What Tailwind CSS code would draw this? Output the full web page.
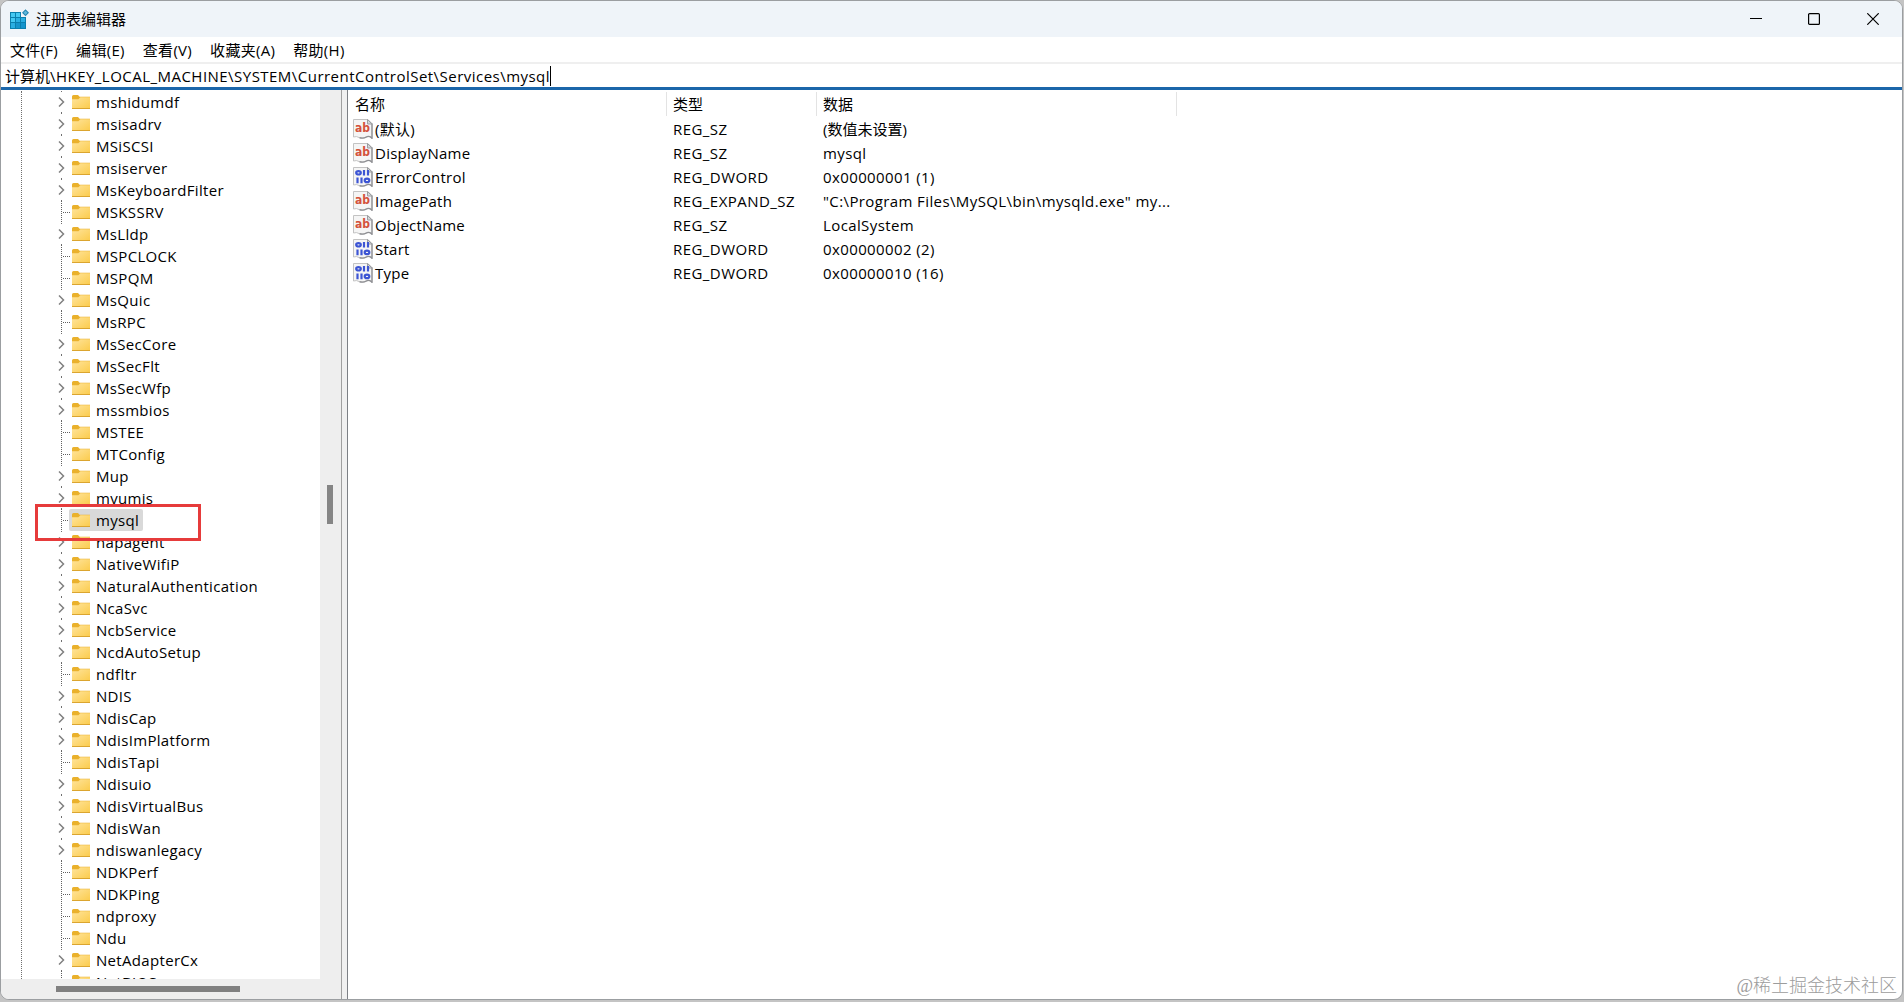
<!DOCTYPE html>
<html lang="zh-CN">
  <head>
    <meta charset="UTF-8" />
    <meta name="viewport" content="width=device-width, initial-scale=1.0" />
    <title>注册表编辑器</title>
    <script src="https://cdn.jsdelivr.net/npm/@tailwindcss/browser@4"></script>
  </head>
  <body class="h-screen overflow-hidden bg-[#c4c4c4] font-['Open_Sans','Noto_Sans_CJK_SC',sans-serif] text-[15px] text-black">
    <svg class="absolute h-0 w-0">
      <defs>
        <linearGradient id="folderFill" x1="0" y1="0" x2="1" y2="1">
          <stop offset="0" stop-color="#ffe49c" />
          <stop offset="1" stop-color="#fbcb4b" />
        </linearGradient>
      </defs>
      <symbol id="folder" viewBox="0 0 18 16">
        <path d="M0 2.5Q0 1 1.5 1H6l1.6 1.7H18V7H0z" fill="#eab12c" />
        <path d="M0 5.3h6.4L8.4 3.3H18V15H0z" fill="url(#folderFill)" />
        <path d="M0 14.5h18" stroke="#dba52f" />
      </symbol>
      <symbol id="page" viewBox="0 0 20 20">
        <path d="M.5 .5H15l4 4V19.3q-2-2.6-5-1.6-4 2.3-7.5 1Q3.5 16.8 .5 18z" fill="#f5f5f5" stroke="#c3c3c3" />
        <path d="M19 4.5V19.3q-2-2.6-5-1.6-4 2.3-7.5 1" fill="none" stroke="#8f9094" stroke-width="1.3" />
        <path d="M14.5 .5V5H19z" fill="#d5d7d9" stroke="#9c9ea2" />
      </symbol>
    </svg>

    <div class="flex h-[1000px] w-[1903px] flex-col overflow-hidden rounded-[9px] border border-[#9b9ea1] bg-white">
      <!-- title bar -->
      <header class="flex h-9 shrink-0 items-center bg-[#eff4f9] pl-2">
        <svg class="h-5 w-5" viewBox="0 0 20 20">
          <path d="M1 3h11v5h5v12H1z" fill="#0b7fae" />
          <path d="M2 4h4v4H2zM7 4h4v4H7zM2 9h4v4H2z" fill="#45c8f2" />
          <path d="M7 9h4v4H7zM2 14h4v5H2zM12 9h4v4h-4z" fill="#2aaee2" />
          <path d="M7 14h4v5H7zM12 14h4v5h-4z" fill="#1594cc" />
          <path d="M16.5 .3L20 3.8 16.5 7.3 13 3.8z" fill="#2586b3" />
          <path d="M16.5 1.8l2 2-2 2-2-2z" fill="#5fb9dc" />
        </svg>
        <span class="ml-[7px]">注册表编辑器</span>
        <div class="ml-auto flex items-center pr-[23px]">
          <svg class="mr-[46px] h-3 w-3" viewBox="0 0 12 12"><path d="M0 5.5h12" stroke="#000" /></svg>
          <svg class="mr-[47px] h-3 w-3" viewBox="0 0 12 12"><rect x=".6" y=".6" width="10.8" height="10.8" rx="1" fill="none" stroke="#000" stroke-width="1.2" /></svg>
          <svg class="h-3 w-3" viewBox="0 0 12 12"><path d="M.3 .3l11.4 11.4M11.7 .3L.3 11.7" stroke="#000" stroke-width="1.2" /></svg>
        </div>
      </header>

      <nav class="flex h-[25px] shrink-0 items-center gap-[18px] pt-0.5 pl-[9px] tracking-[0.3px]">
        <span>文件(F)</span>
        <span>编辑(E)</span>
        <span>查看(V)</span>
        <span>收藏夹(A)</span>
        <span>帮助(H)</span>
      </nav>

      <!-- address bar -->
      <div class="flex h-7 shrink-0 items-center border-t-2 border-b-3 border-t-[#efefef] border-b-[#1b66aa] pt-px pl-1">
        <span class="whitespace-nowrap">计算机<span class="tracking-[0.47px]">\HKEY_LOCAL_MACHINE\SYSTEM\CurrentControlSet\Services\mysql</span></span>
        <span class="h-5 w-px bg-black"></span>
      </div>

      <main class="flex min-h-0 flex-1">
        <!-- key tree -->
        <section class="flex w-[341px] shrink-0 flex-col border-r border-[#a0a0a0]">
          <div class="flex h-[889px] shrink-0">
            <div class="relative flex-1 overflow-hidden pt-px pl-5">
              <div id="tree" class="border-l border-dotted border-[#6f6f6f] tracking-[0.32px]"></div>
            </div>
            <div class="w-[21px] bg-[#eeeeee] pt-[395px] pl-[7px]">
              <div class="h-[39px] w-1.5 bg-[#858585]"></div>
            </div>
          </div>
          <div class="flex-1 bg-[#eeeeee] pt-[7px] pl-[55px]">
            <div class="h-1.5 w-[184px] bg-[#808080]"></div>
          </div>
        </section>
        <div class="w-[5px] shrink-0 bg-[#f0f0f0]"></div>

        <!-- values -->
        <section class="flex-1 border-l border-[#7d8085] pt-0.5">
          <div class="flex h-6 leading-6">
            <div class="w-[319px] border-r border-[#e3e3e3] pl-[7px]">名称</div>
            <div class="w-[150px] border-r border-[#e3e3e3] pl-1.5">类型</div>
            <div class="w-[360px] border-r border-[#e3e3e3] pl-1.5">数据</div>
          </div>
          <div id="values" class="pt-px"></div>
        </section>
      </main>
    </div>

    <!-- highlight box around mysql -->
    <div class="absolute top-[504px] left-[35px] h-[37px] w-[166px] border-3 border-[#e63b3b]"></div>
    <div class="absolute right-[7px] bottom-[2px] font-['Liberation_Serif','Noto_Sans_CJK_SC',serif] text-[18px] font-light text-[#9c9c9c]">@稀土掘金技术社区</div>

    <script>
      // "+" marks keys that have subkeys
      const keys = [
        "+mshidumdf", "+msisadrv", "+MSiSCSI", "+msiserver", "+MsKeyboardFilter",
        "MSKSSRV", "+MsLldp", "MSPCLOCK", "MSPQM", "+MsQuic", "MsRPC",
        "+MsSecCore", "+MsSecFlt", "+MsSecWfp", "+mssmbios", "MSTEE", "MTConfig",
        "+Mup", "+mvumis", "mysql", "+napagent", "+NativeWifiP",
        "+NaturalAuthentication", "+NcaSvc", "+NcbService", "+NcdAutoSetup",
        "ndfltr", "+NDIS", "+NdisCap", "+NdisImPlatform", "NdisTapi", "+Ndisuio",
        "+NdisVirtualBus", "+NdisWan", "+ndiswanlegacy", "NDKPerf", "NDKPing",
        "ndproxy", "Ndu", "+NetAdapterCx", "NetBIOS",
      ];

      const values = [
        ["(默认)", "REG_SZ", "(数值未设置)"],
        ["DisplayName", "REG_SZ", "mysql"],
        ["ErrorControl", "REG_DWORD", "0x00000001 (1)"],
        ["ImagePath", "REG_EXPAND_SZ", '"C:\\Program Files\\MySQL\\bin\\mysqld.exe" my...'],
        ["ObjectName", "REG_SZ", "LocalSystem"],
        ["Start", "REG_DWORD", "0x00000002 (2)"],
        ["Type", "REG_DWORD", "0x00000010 (16)"],
      ];

      const branch = `<svg class="h-[22px] w-[14px] shrink-0" viewBox="0 0 14 22"><path d="M5.5 0v22M7 11.5h7" fill="none" stroke="#606060" stroke-dasharray="1 1"/></svg>`;
      const chevron = `<svg class="h-[22px] w-[14px] shrink-0" viewBox="0 0 14 22"><path d="M3 6.5l4.5 4.5-4.5 4.5" fill="none" stroke="#808080" stroke-width="1.5"/><path d="M5.5 0v1M5.5 21v1" stroke="#707070"/></svg>`;

      document.getElementById("tree").innerHTML = keys
        .map((key) => {
          const name = key.replace("+", "");
          const selected = name === "mysql" ? "bg-[#d9d9d9]" : "";
          return `<div class="flex h-[22px] items-center pl-[34px]">
            ${key[0] === "+" ? chevron : branch}
            <div class="-ml-px flex h-[22px] items-center rounded-xs pr-1 pl-[3px] ${selected}">
              <svg class="h-4 w-[18px]"><use href="#folder"/></svg>
              <span class="ml-1.5">${name}</span>
            </div>
          </div>`;
        })
        .join("");

      const textGlyph = `<text x="2" y="13" font-family="DejaVu Sans" font-weight="bold" font-size="12.5" textLength="15" lengthAdjust="spacingAndGlyphs" fill="#d4523c">ab</text>`;
      const binaryGlyph = `<g fill="none" stroke="#3d55d4" stroke-width="2.2"><ellipse cx="5.5" cy="5.8" rx="2.3" ry="1.7"/><path d="M11 3v5.6M15 3v5.6M4.5 10.6v5.6M8.5 10.6v5.6"/><ellipse cx="14" cy="13.4" rx="2.3" ry="1.7"/></g>`;

      document.getElementById("values").innerHTML = values
        .map(
          ([name, type, data]) => `<div class="flex h-6 items-center">
            <div class="flex w-[319px] items-center pl-[5px]">
              <svg class="h-5 w-5" viewBox="0 0 20 20"><use href="#page"/>${type === "REG_DWORD" ? binaryGlyph : textGlyph}</svg>
              <span class="ml-0.5 tracking-[0.25px]">${name}</span>
            </div>
            <div class="w-[150px] pl-1.5 tracking-[0.45px]">${type}</div>
            <div class="w-[360px] pl-1.5 whitespace-nowrap ${data.startsWith("(") ? "" : "tracking-[0.39px]"}">${data}</div>
          </div>`
        )
        .join("");
    </script>
  </body>
</html>
